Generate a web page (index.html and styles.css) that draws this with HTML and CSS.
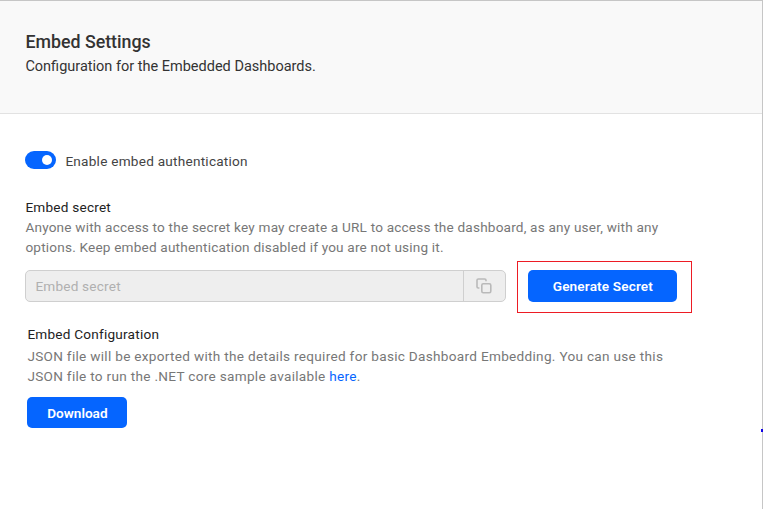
FILE: index.html
```html
<!DOCTYPE html>
<html lang="en">
<head>
<meta charset="utf-8">
<title>Embed Settings</title>
<link rel="stylesheet" href="styles.css">
</head>
<body>
<main class="page">
  <header class="header">
    <h1 class="title">Embed Settings</h1>
    <p class="subtitle">Configuration for the Embedded Dashboards.</p>
  </header>
  <div class="content">
    <div class="auth"><span class="toggle"><span class="knob"></span></span><span class="auth-label">Enable embed authentication</span></div>
    <section class="secret">
      <h2 class="label">Embed secret</h2>
      <p class="desc">Anyone with access to the secret key may create a URL to access the dashboard, as any user, with any<br>options. Keep embed authentication disabled if you are not using it.</p>
      <div class="secret-row">
        <div class="field">
          <span class="placeholder">Embed secret</span>
          <span class="copy"><svg width="16" height="16" viewBox="0 0 16 16" fill="none" stroke="#b9b9b9" stroke-width="1.6"><rect x="5.8" y="5.8" width="9" height="9" rx="1.5"/><path d="M3.4 10H2.3Q1 10 1 8.7V2.3Q1 1 2.3 1H8.7Q10 1 10 2.3V3.2"/></svg></span>
        </div>
        <div class="highlight"><button class="btn generate">Generate Secret</button></div>
      </div>
    </section>
    <section class="config">
      <h2 class="label">Embed Configuration</h2>
      <p class="desc">JSON file will be exported with the details required for basic Dashboard Embedding. You can use this<br>JSON file to run the .NET core sample available <a class="link">here</a>.</p>
      <button class="btn download">Download</button>
    </section>
  </div>
  <span class="edge-mark"></span>
</main>
</body>
</html>
```
FILE: styles.css
```css
* { box-sizing: border-box; }
body { margin: 0; font-family: Roboto, "Liberation Sans", sans-serif; background: #fff; }
h1, h2, p { margin: 0; }
.page { position: relative; width: 763px; height: 509px; border-top: 1px solid #c6c6c6; border-right: 1px solid #c6c6c6; }
.header { height: 113px; padding: 29px 25px 0 25.4px; background: #f9f9f9; border-bottom: 1px solid #e2e2e2; }
.title { font-size: 17.8px; line-height: 24px; font-weight: 500; color: #333; }
.subtitle { font-size: 14.5px; line-height: 20px; margin-top: 3px; color: #333; }
.content { padding: 36px 25px 0 25.4px; }
.auth { display: flex; align-items: center; height: 20px; gap: 9px; }
.toggle { display: flex; justify-content: flex-end; align-items: center; width: 31px; height: 18px; padding-right: 4px; border-radius: 9px; background: #0565ff; }
.knob { width: 10px; height: 10px; border-radius: 50%; background: #fff; }
.auth-label { padding-top: 1px; font-size: 13.6px; letter-spacing: .24px; color: #444; }
.secret { margin-top: 27px; }
.label { font-size: 13.6px; line-height: 20px; font-weight: 400; letter-spacing: .22px; color: #222; }
.desc { font-size: 13.6px; line-height: 20px; letter-spacing: .19px; color: #777; white-space: nowrap; }
.secret-row { display: flex; align-items: flex-start; gap: 11px; margin-top: 4px; }
.field { display: flex; width: 481px; height: 32px; margin-top: 9px; border: 1px solid #cfcfcf; border-radius: 5px; background: #eee; overflow: hidden; }
.placeholder { flex: 1; padding-left: 9px; font-size: 13.6px; line-height: 30px; letter-spacing: .2px; color: #b0b0b0; }
.copy { display: flex; align-items: center; justify-content: center; width: 42px; padding-right: 2px; border-left: 1px solid #cfcfcf; }
.highlight { width: 175px; height: 52px; padding: 8px 0 0 10px; border: 1px solid #ed1c24; }
.btn { display: block; height: 31px; padding: 0; border: 0; border-radius: 5px; background: #0565ff; color: #fff; font-family: inherit; font-size: 13.6px; font-weight: 600; }
.generate { width: 149px; height: 32px; padding-bottom: 1px; letter-spacing: .15px; }
.download { width: 100px; margin-top: 11px; }
.config { margin: 11px 0 0 2px; }
.config .desc { margin-top: 2px; letter-spacing: .295px; }
.link { color: #0565ff; }
.edge-mark { position: absolute; right: -1px; top: 428px; width: 2px; height: 3px; background: #1100e6; }
```
